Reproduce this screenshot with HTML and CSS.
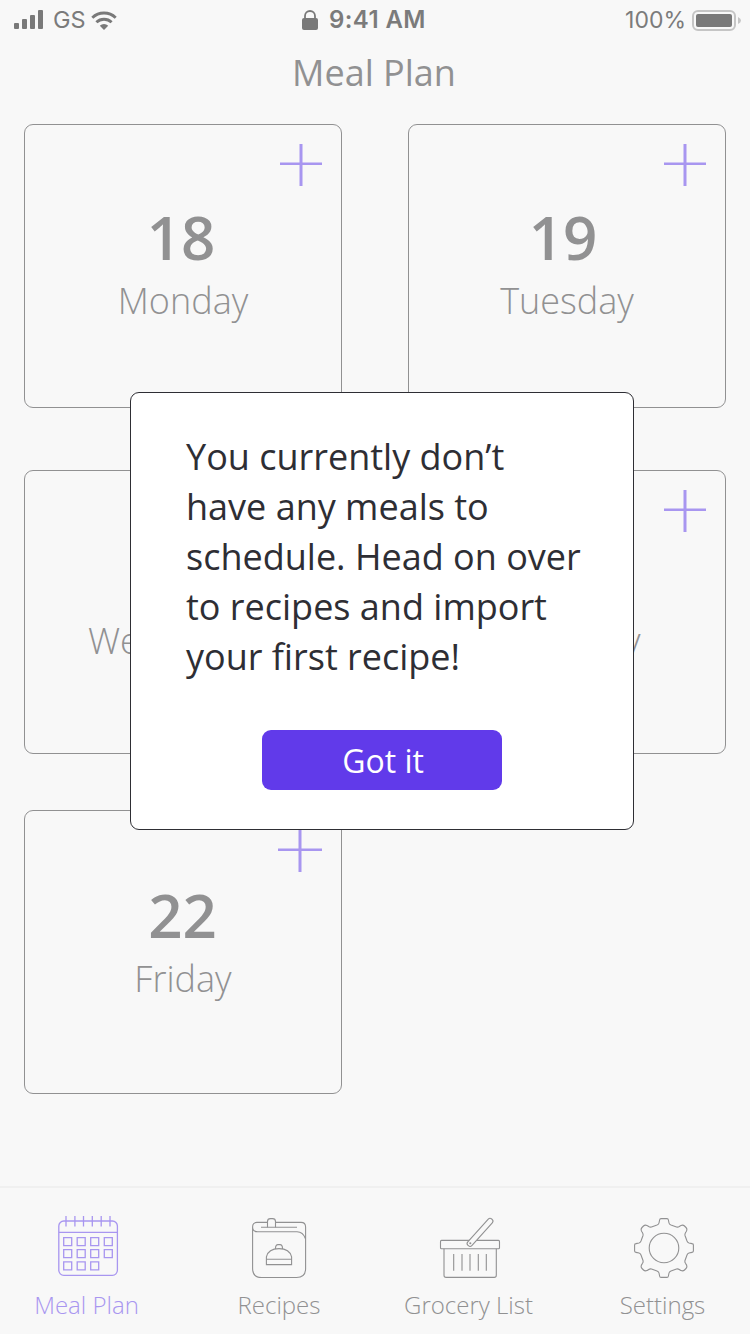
FILE: index.html
```html
<!DOCTYPE html>
<html lang="en">
<head>
<meta charset="utf-8">
<title>Meal Plan</title>
<link rel="stylesheet" href="styles.css">
</head>
<body>
<div class="screen">
  <header class="status">
    <div class="status-left">
      <svg class="signal" width="30" height="20" viewBox="0 0 30 20"><rect x="0" y="13" width="5" height="6" rx="1"/><rect x="8" y="9" width="5" height="10" rx="1"/><rect x="16" y="5" width="5" height="14" rx="1"/><rect x="24" y="0" width="5" height="19" rx="1"/></svg>
      <span class="carrier">GS</span>
      <svg class="wifi" width="26" height="19" viewBox="0 0 26 19"><path d="M1.300 6.700a17 17 0 0 1 23.400 0M5.400 11.300a11 11 0 0 1 15.200 0" fill="none" stroke="#797979" stroke-width="2.900"/><path d="M8.800 14.700a6.200 6.200 0 0 1 8.400 0L13 18.900z"/></svg>
    </div>
    <div class="status-center">
      <svg width="16" height="20" viewBox="0 0 16 20"><rect x="0" y="8" width="16" height="12" rx="2"/><path d="M3 9V6a5 5 0 0 1 10 0v3" fill="none" stroke="#797979" stroke-width="1.800"/></svg>
      <span class="clock">9:41 AM</span>
    </div>
    <div class="status-right">
      <span class="percent">100%</span>
      <svg width="49" height="21" viewBox="0 0 49 21"><rect x="1" y="1" width="42" height="19" rx="5" fill="none" stroke="#c5c5c5" stroke-width="2"/><rect x="4" y="4" width="36" height="13" rx="2"/><path d="M46 7q3 1.500 3 3.500t-3 3.500z" fill="#c5c5c5"/></svg>
    </div>
  </header>
  <h1 class="title">Meal Plan</h1>

  <main class="days">
    <article class="card card-mon"><svg class="plus" width="42" height="42" viewBox="0 0 42 42"><path d="M21 0v42" stroke-width="3"/><path d="M0 19.750h42" stroke-width="2.500"/></svg><b class="date">18</b><span class="day">Monday</span></article>
    <article class="card card-tue"><svg class="plus" width="42" height="42" viewBox="0 0 42 42"><path d="M21 0v42" stroke-width="3"/><path d="M0 19.750h42" stroke-width="2.500"/></svg><b class="date">19</b><span class="day">Tuesday</span></article>
    <article class="card card-mid"><svg class="plus" width="42" height="42" viewBox="0 0 42 42"><path d="M21 0v42" stroke-width="3"/><path d="M0 19.750h42" stroke-width="2.500"/></svg><b class="date">20</b><span class="day">Wednesday</span></article>
    <article class="card card-mid"><svg class="plus" width="42" height="42" viewBox="0 0 42 42"><path d="M21 0v42" stroke-width="3"/><path d="M0 19.750h42" stroke-width="2.500"/></svg><b class="date">21</b><span class="day">Thursday</span></article>
    <article class="card card-last"><svg class="plus" width="44" height="44" viewBox="0 0 44 44"><path d="M22 0v44" stroke-width="3"/><path d="M0 21.750h44" stroke-width="2.500"/></svg><b class="date">22</b><span class="day">Friday</span></article>
  </main>

  <nav class="tabs">
    <a class="tab tab-plan active">
      <svg width="60" height="60" viewBox="0 0 60 60"><rect x=".8" y="5" width="58.600" height="54.300" rx="5"/><path d="M1 16.300h58M8 0v10.600M16.900 0v10.600M25.500 0v10.600M34.300 0v10.600M43.200 0v10.600M52 0v10.600"/><path d="M5.700 21.600h8v8h-8zM19.200 21.600h8v8h-8zM32.700 21.600h8v8h-8zM46.300 21.600h8v8h-8zM5.700 33.700h8v8h-8zM19.200 33.700h8v8h-8zM32.700 33.700h8v8h-8zM46.300 33.700h8v8h-8zM5.700 45.800h8v8h-8zM19.200 45.800h8v8h-8zM32.700 45.800h8v8h-8z"/></svg>
      <span>Meal Plan</span>
    </a>
    <a class="tab tab-recipes">
      <svg width="54" height="60" viewBox="0 0 54 60"><path d="M15.500 4.400H5Q.6 4.400.6 9v41.500q0 9 9 9h35q9 0 9-9V9q0-4.600-4.600-4.600H23.500M.6 9q0 4.700 4.900 4.700H45q6 0 8.500 7M9 9.200h6.500M23.500 9.200H45"/><path d="M15.500 9.200V3.500q0-2.900 3-2.900h2q3 0 3 2.900v5.700z"/><path d="M14.400 41.300h25.200v5.300H14.400zM14.400 41.300v-2.500q2-8.200 12.600-8.200t12.600 8.200v2.500M23.500 30.600q0-4 2.500-4h2q2.500 0 2.500 4"/></svg>
      <span>Recipes</span>
    </a>
    <a class="tab tab-grocery">
      <svg width="60" height="60" viewBox="0 0 60 60"><path d="M4 30.800v26.500q0 2.100 2.100 2.100h48.100q2.100 0 2.100-2.100V30.800M13.700 36v16.700M22 36v16.700M30 36v16.700M38.300 36v16.700M46.300 36v16.700"/><rect x=".5" y="22.400" width="59" height="8.400" rx="1"/><rect class="handle" x="-2.700" y="-2.700" width="35.400" height="5.400" rx="2.400" transform="translate(30 25.500) rotate(-48)"/><circle cx="30.300" cy="25.300" r=".5"/></svg>
      <span>Grocery List</span>
    </a>
    <a class="tab tab-settings">
      <svg width="60" height="60" viewBox="0 0 60 60"><defs><path id="gear-quarter" d="M30 .6H33Q34.200.6 34.400 2L35 5Q35.300 6.300 37 7L42.500 9Q44 9.400 45.300 8.500Q48.500 6 50.500 8L52 9.500Q54 11.500 51.500 14.700Q50.600 16 51 17.500L53 23Q53.700 24.700 55 25L58 25.600Q59.400 25.800 59.400 27V30"/></defs><use href="#gear-quarter"/><use href="#gear-quarter" transform="rotate(90 30 30)"/><use href="#gear-quarter" transform="rotate(180 30 30)"/><use href="#gear-quarter" transform="rotate(270 30 30)"/><circle cx="30" cy="30" r="14.800"/></svg>
      <span>Settings</span>
    </a>
  </nav>

  <section class="modal" role="dialog">
    <p class="message">You currently don’t have any meals to schedule. Head on over to recipes and import your first recipe!</p>
    <button class="confirm">Got it</button>
  </section>
</div>
</body>
</html>
```

FILE: styles.css
```css
* { box-sizing: border-box; }
body { margin: 0; }
.screen {
  position: relative;
  display: flex;
  flex-direction: column;
  width: 750px;
  height: 1334px;
  overflow: hidden;
  background: #f8f8f8;
  color: #919192;
  font-family: "Open Sans", sans-serif;
}
.status {
  display: grid;
  grid-template-columns: 288px auto 1fr;
  grid-template-rows: 40px;
  height: 40px;
  padding: 0 9px 0 14px;
  color: #7b7b7b;
  fill: #797979;
  font: 400 24px/40px Inter, sans-serif;
}
.status-left, .status-center, .status-right { display: flex; align-items: center; }
.status-left { gap: 9px; }
.carrier { font-size: 23.5px; line-height: 38px; }
.wifi { margin-left: -4px; }
.status-center { gap: 11px; }
.status-right { justify-content: flex-end; gap: 6px; padding-top: 1px; }
.clock { font-weight: 600; letter-spacing: .4px; }
.percent { font-size: 23px; line-height: 39px; }
.title {
  margin: 0 2px 0 0;
  height: 84px;
  font-size: 36px;
  font-weight: 400;
  line-height: 66px;
  text-align: center;
}
.days {
  display: grid;
  grid-template-columns: 318px 318px;
  grid-template-rows: 346px 340px 284px;
  column-gap: 66px;
  padding-left: 24px;
}
.card {
  position: relative;
  display: flex;
  flex-direction: column;
  align-items: center;
  height: 284px;
  padding-top: 71px;
  border: 1px solid #919192;
  border-radius: 9px;
}
.plus { position: absolute; top: 19px; right: 19px; stroke: #a896f0; }
.date { font-size: 60px; font-weight: 600; line-height: 82px; }
.day { margin-top: 1px; font-size: 36px; font-weight: 300; line-height: 44px; }
.card-mon .date { margin-right: 4px; }
.card-tue .date { margin-right: 8px; }
.card-mid { padding-top: 65px; }
.card-mid .day { margin-right: 2px; }
.card-last { padding-top: 63px; }
.card-last .plus { top: 17px; }
.card-last .date { margin-right: 1px; }
.tabs {
  display: flex;
  margin-top: auto;
  height: 148px;
  padding-top: 30px;
  border-top: 2px solid #f0f0f0;
}
.tab {
  display: flex;
  flex: none;
  flex-direction: column;
  align-items: center;
  gap: 10px;
  font-size: 24px;
  font-weight: 300;
  line-height: 33px;
  white-space: nowrap;
}
.tab svg { fill: none; stroke: #919192; stroke-width: 1.1; overflow: visible; }
.tab .handle { fill: #f8f8f8; }
.tab-plan { width: 173px; }
.tab-recipes { width: 212px; }
.tab-grocery { width: 167px; }
.tab-settings { width: 221px; }
.tab-plan svg { margin: -2px 0 2px 3px; }
.tab-grocery svg, .tab-settings svg { margin-left: 3px; }
.active { color: #a896f0; }
.tab.active svg { stroke: #a896f0; stroke-width: 1.3; }
.modal {
  position: absolute;
  top: 392px;
  left: 130px;
  display: flex;
  flex-direction: column;
  align-items: center;
  width: 504px;
  height: 438px;
  padding: 39px 42px 0 55px;
  border: 1px solid #2e2e34;
  border-radius: 9px;
  background: #fff;
  color: #2e2e34;
}
.message { margin: 0; font-size: 36px; line-height: 50px; }
.confirm {
  width: 240px;
  height: 60px;
  margin: 48px 13px 0 0;
  padding: 1px 0 0 2px;
  border: 0;
  border-radius: 9px;
  background: #613aea;
  color: #fff;
  font: 400 32px/59px "Open Sans", sans-serif;
}
```
